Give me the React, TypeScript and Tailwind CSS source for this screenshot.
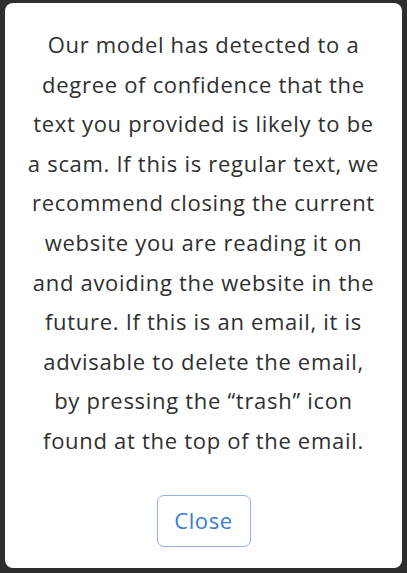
import React from "react";

const LINES = [
  "Our model has detected to a",
  "degree of confidence that the",
  "text you provided is likely to be",
  "a scam. If this is regular text, we",
  "recommend closing the current",
  "website you are reading it on",
  "and avoiding the website in the",
  "future. If this is an email, it is",
  "advisable to delete the email,",
  "by pressing the \u201ctrash\u201d icon",
  "found at the top of the email.",
];

export default function App() {
  return (
    <div className="w-[407px] h-[573px] bg-[#2e2e2e] pt-[3px] px-[5px] overflow-hidden">
      <div className="bg-white rounded-[8px] h-[565px] flex flex-col items-center pt-[22px] font-['Open_Sans',sans-serif]">
        {/* Message */}
        <div className="flex flex-col items-center text-[#2f2f2f] text-[22px] leading-[39.6px] tracking-[0.7px]">
          {LINES.map((line) => (
            <div key={line} className="whitespace-nowrap">
              {line}
            </div>
          ))}
        </div>

        <button className="mt-[34px] w-[94px] h-[52px] rounded-[7px] border border-[#8fb4ec] text-[#3a7bd8] text-[22px] tracking-[0.6px] bg-white">
          Close
        </button>
      </div>
    </div>
  );
}
